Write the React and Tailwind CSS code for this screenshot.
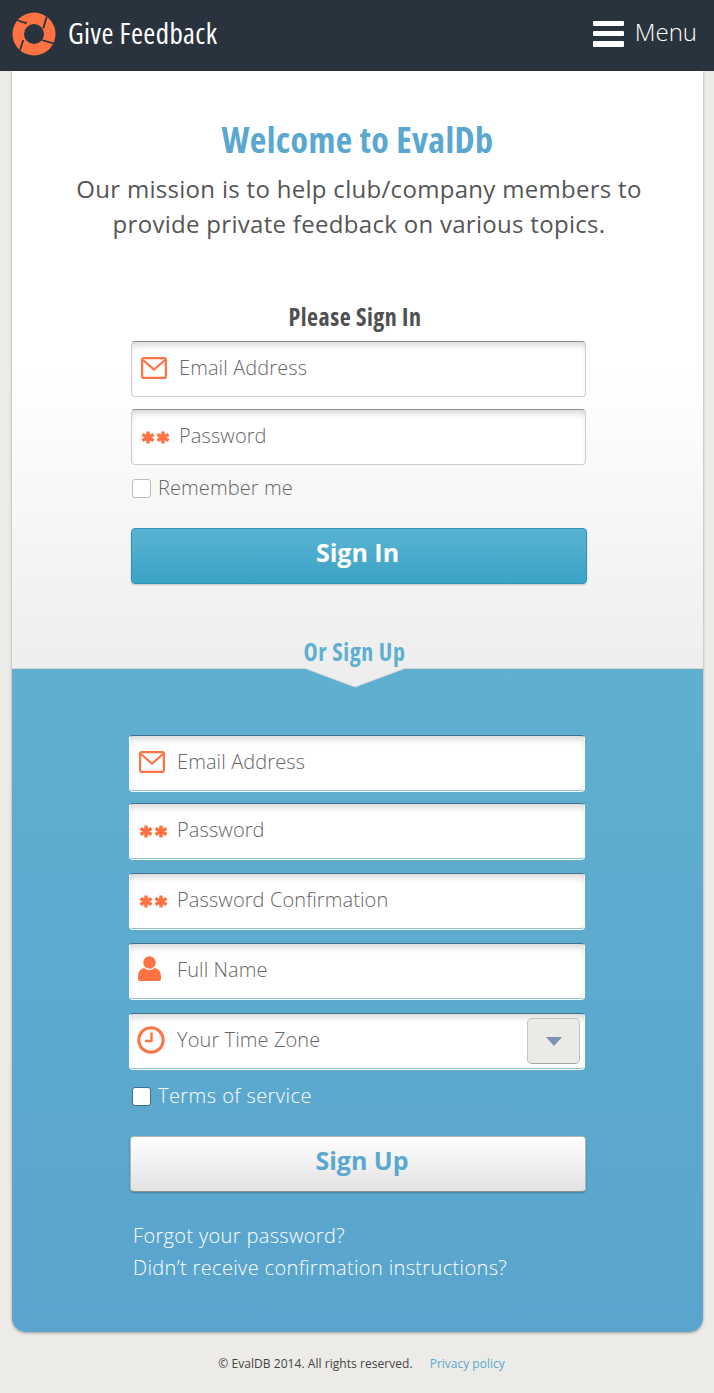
import React from "react";

const Mail = () => (
  <svg width="26" height="22" viewBox="0 0 26 22" fill="none" stroke="#ff7243" strokeWidth="2.2">
    <rect x="1.1" y="1.1" width="23.8" height="19.8" rx="2" />
    <path d="M2 3l11 9.500L24 3" />
  </svg>
);
const Stars = () => (
  <div className="mt-[4px] flex gap-[1px]">
    {[0, 1].map((i) => (
      <svg key={i} width="14" height="13" viewBox="0 0 14 13" stroke="#ff7243" strokeWidth="3.4">
        <path d="M7 0.5v12M1.4 3.4l11.2 6.2M12.6 3.4L1.4 9.6" />
      </svg>
    ))}
  </div>
);
const Person = () => (
  <svg width="23" height="25" viewBox="0 0 23 25" fill="#ff7243">
    <circle cx="11.5" cy="6.5" r="6.2" />
    <path d="M0 21c0-5 2-8 6-9 3 2.500 8 2.500 11 0 4 1 6 4 6 9v1.500a2.500 2.500 0 0 1-2.500 2.500h-18A2.500 2.500 0 0 1 0 22.500z" />
  </svg>
);
const Clock = () => (
  <svg width="28" height="28" viewBox="0 0 28 28" fill="none" stroke="#ff7243">
    <circle cx="14" cy="14" r="12.2" strokeWidth="3" />
    <path d="M14.500 6.500v8.500H8" strokeWidth="2.400" />
  </svg>
);
const Logo = () => (
  <svg width="44" height="44" viewBox="0 0 44 44">
    <circle cx="22" cy="22" r="21.500" fill="#ff7243" />
    <circle cx="22" cy="22" r="10" fill="#29333d" />
    <path d="M4.700 8l10 3.300M34.700 4.700L31.300 16.300M41.300 31.300L29.700 28M8 38l3.300-10" stroke="#29333d" strokeWidth="1.800" />
  </svg>
);

function Field({ icon, label, iconBox, blue, children }) {
  return (
    <div
      className={`relative flex h-14 items-center rounded-[4px] bg-white pb-[3px] border ${
        blue
          ? "border-white border-t-[#3f6f8c] border-b-[#8fbfd4] shadow-[inset_0_6px_7px_-3px_rgba(0,0,0,0.17),0_1px_0_#ffffff]"
          : "border-[#cfcfcf] border-t-[#8d8d8d] shadow-[inset_0_6px_7px_-3px_rgba(0,0,0,0.17)]"
      }`}
    >
      <div className={`flex w-[47px] shrink-0 justify-center ${iconBox || ""}`}>{icon}</div>
      <span className="text-[20px] font-light leading-none tracking-[0.1px] text-[#666]">{label}</span>
      {children}
    </div>
  );
}

export default function App() {
  return (
    <div className="min-h-[1393px] bg-[#ecebe7] font-['Open_Sans',sans-serif]">
      <header className="flex h-[71px] items-center justify-between bg-[#29333d] pb-[4px] pl-3 pr-[17px]">
        <div className="flex items-center gap-3">
          <Logo />
          <span className="mb-[2px] font-['Liberation_Sans_Narrow','Open_Sans',sans-serif] text-[29px] font-medium leading-none tracking-[0.4px] text-white [font-stretch:75%]">
            Give Feedback
          </span>
        </div>
        <div className="flex items-center gap-[11px]">
          <div className="flex w-[31px] flex-col gap-[5px]">
            <div className="h-[5px] rounded-[1px] bg-white" />
            <div className="h-[5px] rounded-[1px] bg-white" />
            <div className="h-[6px] rounded-[1px] bg-white" />
          </div>
          <span className="mb-[4px] text-[24px] font-light leading-none text-white">Menu</span>
        </div>
      </header>

      <main className="ml-3 mr-[11px] overflow-hidden rounded-b-[14px] shadow-[0_1px_3px_rgba(0,0,0,0.35)]">
        <section className="h-[597px] bg-gradient-to-b from-white from-50% to-[#eeeeee] pt-[48px]">
          <h1 className="text-center text-[36px] font-bold leading-[42px] tracking-[0.4px] text-[#5aa8cf] [font-stretch:75%]">
            Welcome to EvalDb
          </h1>
          <p className="mt-[10px] pl-[3px] text-center text-[24px] leading-[35px] tracking-[0.3px] text-[#555]">
            Our mission is to help club/company members to
            <br />
            provide private feedback on various topics.
          </p>
          <h2 className="mt-[60px] pr-[5px] text-center text-[24px] font-bold leading-[32px] tracking-[0.5px] text-[#505050] [font-stretch:75%]">
            Please Sign In
          </h2>
          <div className="ml-[119px] mt-2 flex w-[455px] flex-col gap-3">
            <Field iconBox="pr-[3px]" icon={<Mail />} label="Email Address" />
            <Field icon={<Stars />} label="Password" />
          </div>
          <label className="ml-[120px] mt-[9px] flex h-7 items-center gap-[7px] text-[20px] font-light tracking-[0.1px] text-[#666]">
            <span className="h-[19px] w-[19px] rounded-[3px] border border-[#bbb] bg-white" />
            Remember me
          </label>
          <button className="ml-[119px] mt-[26px] flex h-14 w-[456px] items-center justify-center rounded-[4px] border border-[#2f93b5] bg-gradient-to-b from-[#59b3d2] to-[#3aa3c6] pb-[6px] pr-[3px] text-[25px] font-bold text-white shadow-[0_1px_2px_rgba(0,0,0,0.2)]">
            Sign In
          </button>
          <div className="mt-[52px] pr-[6px] text-center text-[24px] font-bold leading-[32px] tracking-[0.6px] text-[#5eafd0] [font-stretch:75%]">
            Or Sign Up
          </div>
        </section>

        <section className="relative h-[664px] border-t border-[#d4d4d4] bg-gradient-to-b from-[#5fb0d0] to-[#5aa4cd] pt-[66px]">
          <svg className="absolute left-[292px] top-[-1px]" width="102" height="20" viewBox="0 0 102 20">
            <path d="M0 0h102L51 19z" fill="#eeeeee" />
            <path d="M0 0L51 19L102 0" fill="none" stroke="#d4d4d4" />
          </svg>
          <div className="ml-[117px] flex w-[456px] flex-col">
            <Field blue iconBox="pr-[3px]" icon={<Mail />} label="Email Address" />
            <div className="mt-3">
              <Field blue icon={<Stars />} label="Password" />
            </div>
            <div className="mt-[14px]">
              <Field blue icon={<Stars />} label="Password Confirmation" />
            </div>
            <div className="mt-[14px]">
              <Field blue iconBox="mb-[2px] pr-[9px]" icon={<Person />} label="Full Name" />
            </div>
            <div className="mt-[14px]">
              <Field blue iconBox="pr-[6px]" icon={<Clock />} label="Your Time Zone">
                <div className="absolute right-[4px] top-[4px] flex h-[46px] w-[53px] items-center justify-center rounded-[5px] border border-[#c4c4c0] border-b-[#a3a3a0] bg-[#ebeae6]">
                  <svg width="16" height="9" viewBox="0 0 16 9">
                    <path d="M0 0h16L8 9z" fill="#7c92b5" />
                  </svg>
                </div>
              </Field>
            </div>
          </div>
          <label className="ml-[120px] mt-[13px] flex h-7 items-center gap-[7px] text-[20px] font-light tracking-[0.45px] text-white">
            <span className="h-[19px] w-[19px] rounded-[3px] border border-[#3f6f8c] bg-white" />
            Terms of service
          </label>
          <button className="ml-[118px] mt-[26px] flex h-14 w-[456px] items-center justify-center rounded-[4px] border border-[#b5b5b5] border-b-[#8f8f8f] bg-gradient-to-b from-white to-[#e2e2e2] pb-[6px] pl-[8px] text-[25px] font-bold text-[#5aa8cf] shadow-[0_1px_2px_rgba(0,0,0,0.25)]">
            Sign Up
          </button>
          <div className="ml-[121px] mt-[28px] text-[20px] font-light leading-[31.500px] tracking-[0.35px] text-white">
            <div>Forgot your password?</div>
            <div>Didn’t receive confirmation instructions?</div>
          </div>
        </section>
      </main>

      <footer className="mt-[24px] flex justify-center gap-[17px] pl-[9px] text-[12px] leading-4 text-[#444]">
        <span className="tracking-[0.05px]">© EvalDB 2014. All rights reserved.</span>
        <span className="text-[#5aa8cf]">Privacy policy</span>
      </footer>
    </div>
  );
}
